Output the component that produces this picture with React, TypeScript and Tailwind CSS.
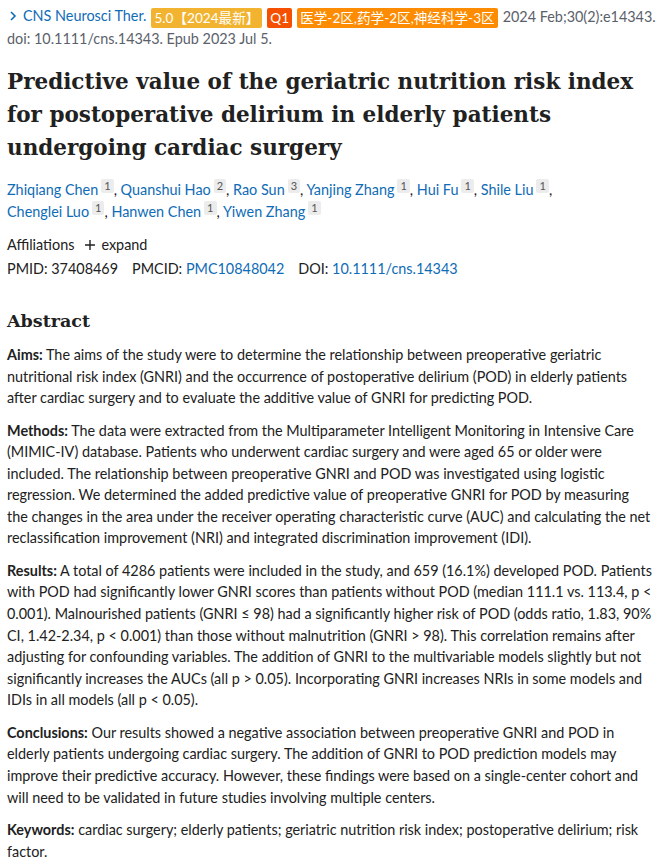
import type { ReactNode } from "react";

const link = "text-[#0f6cb6]";
const serif = { fontFamily: '"DejaVu Serif", "Liberation Serif", serif' };

function Sup({ n }: { n: number }) {
  return (
    <span className="relative -top-[5px] ml-[3px] inline-block rounded-[2px] bg-[#ececec] px-[3px] text-[11px] leading-[14px] text-[#555]">
      {n}
    </span>
  );
}

function Author({ name, n, last }: { name: string; n: number; last?: boolean }) {
  return (
    <>
      <span className={link}>{name}</span>
      <Sup n={n} />
      {last ? null : ", "}
    </>
  );
}

function Para({ label, children }: { label: string; children: ReactNode }) {
  return (
    <p className="mt-[10.8px]">
      <strong className="font-bold">{label}</strong> {children}
    </p>
  );
}

function Badge({ color, children }: { color: string; children: ReactNode }) {
  return (
    <span
      className={`mr-[5px] inline-block rounded-[2px] px-[3px] align-middle text-[13.6px] leading-[20px] text-white ${color}`}
    >
      {children}
    </span>
  );
}

export default function App() {
  return (
    <div
      className="min-h-[866px] bg-white pl-[7px] pr-[2px] pt-[5px] text-[14.4px] leading-[21.6px] text-[#212121]"
      style={{ fontFamily: '"Segoe UI", Lato, "Noto Sans CJK SC", sans-serif' }}
    >
      {/* citation line */}
      <div className="text-[#5b616b]">
        <div className="whitespace-nowrap">
          <span className={`${link} mr-[5px] inline-flex items-center`}>
            <svg width="12" height="12" viewBox="0 0 12 12" className="mr-[4px]">
              <path d="M4 2l4 4-4 4" fill="none" stroke="currentColor" strokeWidth="1.6" />
            </svg>
            CNS Neurosci Ther.
          </span>
          <Badge color="bg-[#f2b430]">5.0【2024最新】</Badge>
          <Badge color="bg-[#f55000]">Q1</Badge>
          <Badge color="bg-[#fd8c02]">医学-2区,药学-2区,神经科学-3区</Badge>
          2024 Feb;30(2):e14343.
        </div>
        <div>doi: 10.1111/cns.14343. Epub 2023 Jul 5.</div>
      </div>

      <h1 className="mt-[15.5px] pr-[6px] text-[21.5px] font-bold leading-[33px] text-[#212121]" style={serif}>
        Predictive value of the geriatric nutrition risk index for postoperative delirium in elderly patients
        undergoing cardiac surgery
      </h1>

      <div className="mt-[14.5px] leading-[22px]">
        <Author name="Zhiqiang Chen" n={1} />
        <Author name="Quanshui Hao" n={2} />
        <Author name="Rao Sun" n={3} />
        <Author name="Yanjing Zhang" n={1} />
        <Author name="Hui Fu" n={1} />
        <Author name="Shile Liu" n={1} />
        <br />
        <Author name="Chenglei Luo" n={1} />
        <Author name="Hanwen Chen" n={1} />
        <Author name="Yiwen Zhang" n={1} last />
      </div>

      <div className="mt-[11px] flex items-center">
        <span>Affiliations</span>
        <span className="ml-[10px] inline-flex items-center">
          <svg width="12" height="12" viewBox="0 0 12 12" className="mr-[5px]">
            <path d="M6 1v10M1 6h10" stroke="currentColor" strokeWidth="1.4" />
          </svg>
          expand
        </span>
      </div>

      <div className="mt-[3px]">
        PMID: 37408469<span className="ml-[14px]">PMCID: </span>
        <span className={link}>PMC10848042</span>
        <span className="ml-[14px]">DOI: </span>
        <span className={link}>10.1111/cns.14343</span>
      </div>

      <h2 className="mt-[27px] text-[17.5px] font-bold leading-[28px]" style={serif}>
        Abstract
      </h2>

      <div className="-mt-[1.8px]">
        <Para label="Aims:">
          The aims of the study were to determine the relationship between preoperative geriatric nutritional risk
          index (GNRI) and the occurrence of postoperative delirium (POD) in elderly patients after cardiac surgery
          and to evaluate the additive value of GNRI for predicting POD.
        </Para>
        <Para label="Methods:">
          The data were extracted from the Multiparameter Intelligent Monitoring in Intensive Care (MIMIC-IV)
          database. Patients who underwent cardiac surgery and were aged 65 or older were included. The relationship
          between preoperative GNRI and POD was investigated using logistic regression. We determined the added
          predictive value of preoperative GNRI for POD by measuring the{"\u00a0"}changes in the area under the
          receiver operating characteristic curve (AUC) and calculating the net reclassification improvement (NRI)
          and integrated discrimination improvement (IDI).
        </Para>
        <Para label="Results:">
          A total of 4286 patients were included in the study, and 659 (16.1%) developed POD. Patients with POD had
          significantly lower GNRI scores than patients without POD (median 111.1 vs. 113.4, p &lt; 0.001).
          Malnourished patients (GNRI ≤ 98) had a significantly higher risk of POD (odds ratio, 1.83, 90% CI,
          1.42-2.34, p &lt; 0.001) than those without malnutrition (GNRI &gt; 98). This correlation remains after
          adjusting for confounding variables. The addition of GNRI to the multivariable models slightly but not
          significantly increases the AUCs (all p &gt; 0.05). Incorporating GNRI increases NRIs in some models and
          IDIs in all models (all p &lt; 0.05).
        </Para>
        <Para label="Conclusions:">
          Our results showed a negative association between preoperative GNRI and POD in elderly patients undergoing
          cardiac surgery. The addition of GNRI to POD prediction models may improve their predictive accuracy.
          However, these findings were based on a single-center cohort and will need to be validated in future
          studies involving multiple centers.
        </Para>
        <Para label="Keywords:">
          cardiac surgery; elderly patients; geriatric nutrition risk index; postoperative delirium; risk factor.
        </Para>
      </div>
    </div>
  );
}
